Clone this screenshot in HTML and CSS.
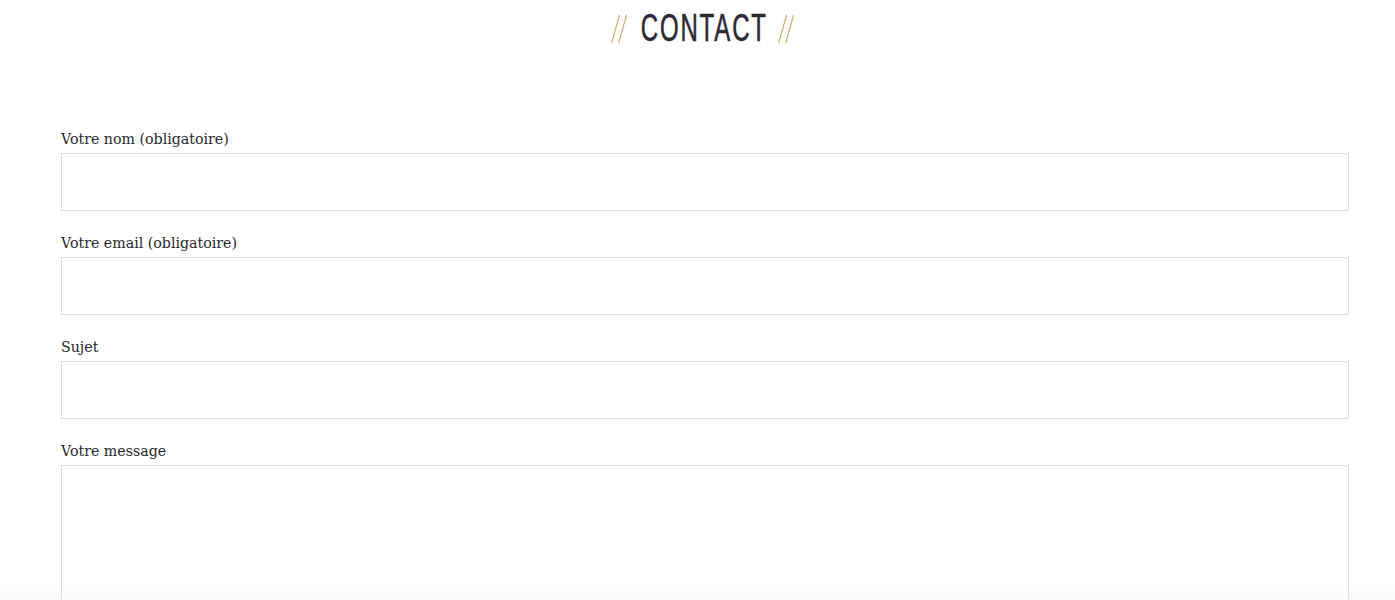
FILE: index.html
```html
<!DOCTYPE html>
<html lang="fr">
<head>
<meta charset="utf-8">
<title>Contact</title>
<link rel="stylesheet" href="styles.css">
</head>
<body>
<header class="page-head">
  <h1 class="title">
    <svg class="slashes slashes-left" width="17" height="30" viewBox="0 0 17 30"><line x1="0.6" y1="29" x2="8.6" y2="1"/><line x1="7.6" y1="29" x2="15.6" y2="1"/></svg>
    <span class="title-box"><span class="title-text">CONTACT</span></span>
    <svg class="slashes slashes-right" width="17" height="30" viewBox="0 0 17 30"><line x1="0.6" y1="29" x2="8.6" y2="1"/><line x1="7.6" y1="29" x2="15.6" y2="1"/></svg>
  </h1>
</header>
<form class="contact-form">
  <div class="field">
    <label class="label" for="nom">Votre nom (obligatoire)</label>
    <input class="input" id="nom" type="text">
  </div>
  <div class="field">
    <label class="label" for="email">Votre email (obligatoire)</label>
    <input class="input" id="email" type="email">
  </div>
  <div class="field">
    <label class="label" for="sujet">Sujet</label>
    <input class="input" id="sujet" type="text">
  </div>
  <div class="field">
    <label class="label" for="msg">Votre message</label>
    <textarea class="textarea" id="msg"></textarea>
  </div>
</form>
<div class="bottom-shade"></div>
</body>
</html>
```

FILE: styles.css
```css
html, body {
  margin: 0;
  padding: 0;
  background: #ffffff;
}
body {
  font-family: "DejaVu Serif", serif;
  color: #2b2a30;
  overflow: hidden;
  height: 600px;
}
.page-head {
  display: flex;
  justify-content: center;
  padding-top: 6px;
  padding-left: 10px;
}
.title {
  margin: 0;
  display: flex;
  align-items: center;
  height: 44px;
}
.slashes line {
  stroke: #cfa865;
  stroke-width: 1.1;
}
.slashes {
  margin-top: 2px;
}
.slashes-left {
  margin-right: 14px;
}
.slashes-right {
  margin-left: 11px;
}
.title-box {
  display: flex;
  justify-content: center;
  width: 125px;
}
.title-text {
  display: inline-block;
  flex-shrink: 0;
  font-family: "Liberation Sans", sans-serif;
  font-weight: 400;
  font-size: 39px;
  letter-spacing: 3px;
  color: #2d2a33;
  transform: scaleX(0.615);
  white-space: nowrap;
  -webkit-text-stroke: 0.6px #2d2a33;
}
.contact-form {
  margin: 79px 0 0 61px;
  width: 1288px;
  display: flex;
  flex-direction: column;
  gap: 22px;
}
.field {
  display: flex;
  flex-direction: column;
}
.label {
  font-size: 14.2px;
  line-height: 21px;
  height: 24px;
  color: #28272d;
}
.input, .textarea {
  box-sizing: border-box;
  width: 100%;
  border: 1px solid #dddddd;
  background: #fff;
  margin: 0;
  padding: 0;
  outline: none;
}
.input {
  height: 58px;
}
.textarea {
  height: 200px;
  resize: none;
}
.bottom-shade {
  position: fixed;
  left: 0;
  right: 0;
  bottom: 0;
  height: 14px;
  background: linear-gradient(to bottom, rgba(240,240,240,0), rgba(240,240,240,0.35));
  pointer-events: none;
}
```
